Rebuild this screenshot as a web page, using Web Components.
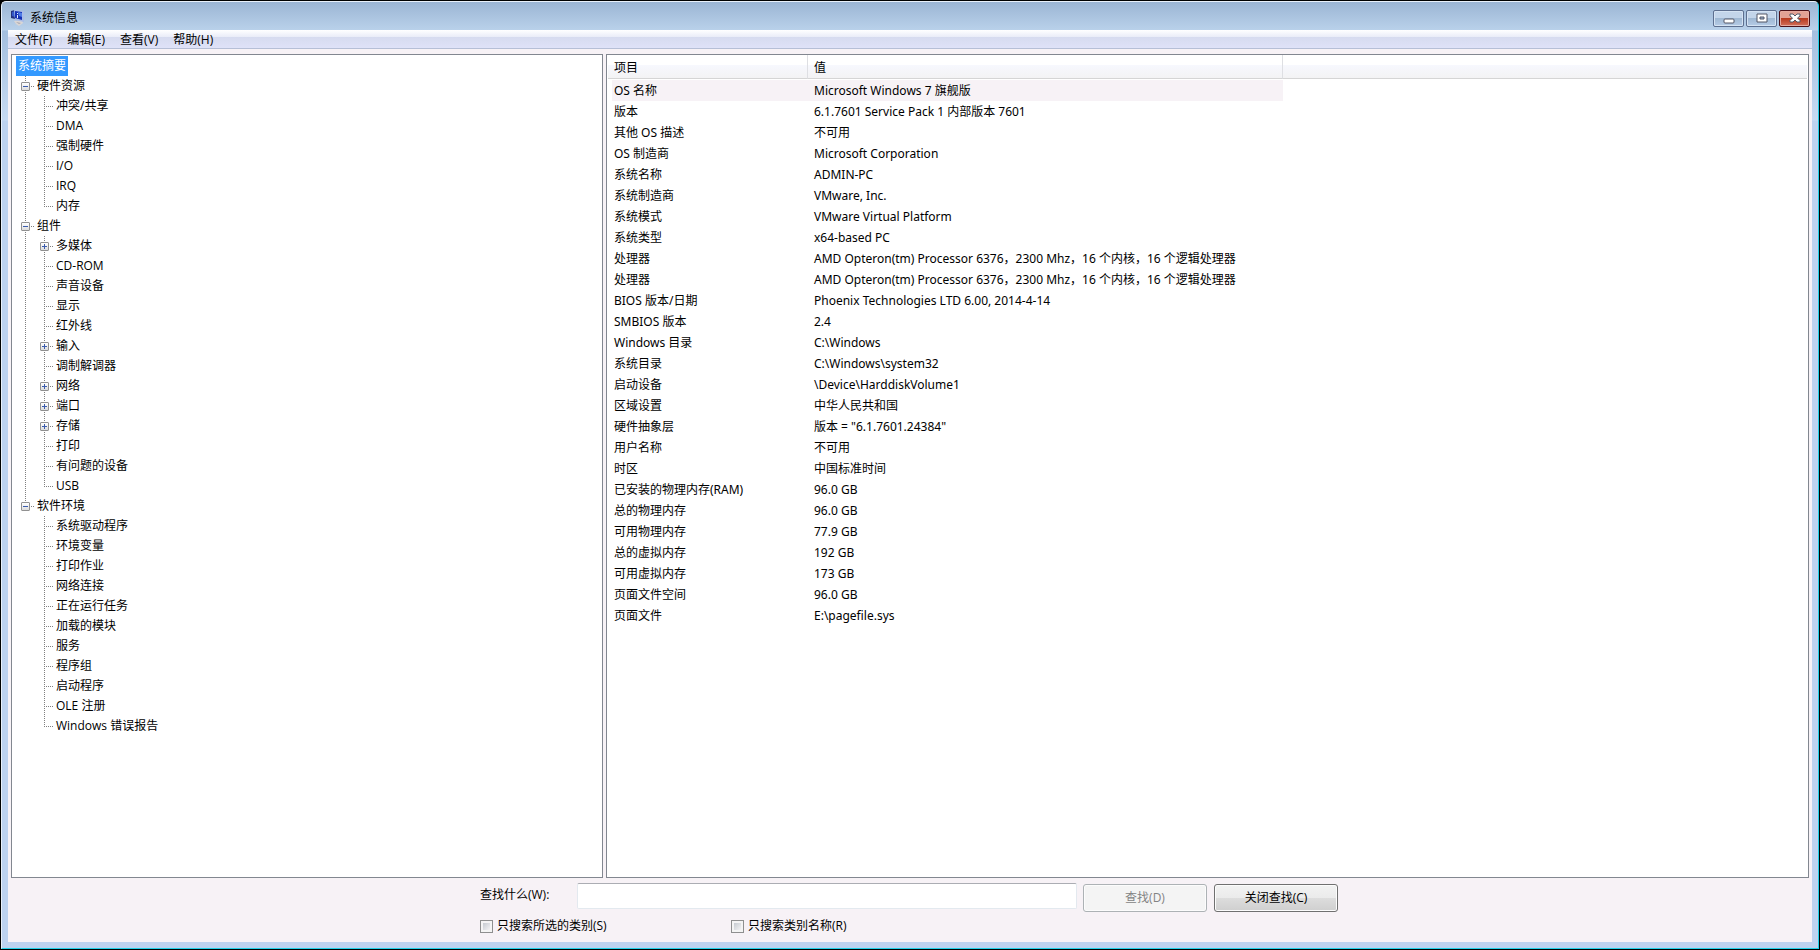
<!DOCTYPE html>
<html lang="zh-CN">
<head>
<meta charset="utf-8">
<title>系统信息</title>
<style>
html, body { height: 100%; margin: 0; }
body { background: #000; font: 12px/20px "Open Sans", "Noto Sans CJK SC", sans-serif; color: #000; }
</style>
</head>
<body>
<sys-window>
  <title-bar slot="title">系统信息</title-bar>
  <menu-strip slot="menu" items="文件(F)|编辑(E)|查看(V)|帮助(H)"></menu-strip>
  <category-tree slot="main"></category-tree>
  <detail-list slot="main"></detail-list>
  <find-panel slot="find"></find-panel>
</sys-window>
<script>
class Base extends HTMLElement {
  constructor() { super(); this.attachShadow({ mode: "open" }); }
  connectedCallback() { this.shadowRoot.innerHTML = this.render(); }
}

customElements.define("sys-window", class extends Base {
  render() { return `
<style>
:host { display: flex; height: 100vh; box-sizing: border-box; padding: 1px; background: #000; --face: #f7f2f6; }
.frame { flex: 1; min-width: 0; display: flex; flex-direction: column; box-sizing: border-box;
  border: 1px solid #e8f0fa; border-right-color: #22d0e8; border-bottom-color: #22d0e8; border-radius: 5px 5px 0 0; padding: 0 6px 6px;
  background: linear-gradient(#9bb5d4, #b9d1ea 28px, #a4bfdf 29px, #c6daf2 118px, #bdd2ef 119px); }
.client { flex: 1; min-height: 0; display: flex; flex-direction: column; background: var(--face); }
.main { flex: 1; min-height: 0; display: grid; grid-template-columns: 592px 1fr; gap: 3px; padding: 5px 3px 0; }
</style>
<div class="frame">
  <slot name="title"></slot>
  <div class="client">
    <slot name="menu"></slot>
    <main class="main"><slot name="main"></slot></main>
    <slot name="find"></slot>
  </div>
</div>`; }
});

customElements.define("title-bar", class extends Base {
  render() { return `
<style>
:host { display: flex; height: 28px; padding: 0 2px 0 3px; }
svg { display: block; }
.icon { margin: 8px 3px 0 0; }
h1 { margin: 6px 0 0; font: inherit; line-height: 20px; flex: 1; }
.controls { display: flex; gap: 2px; padding-top: 8px; }
button { box-sizing: border-box; width: 31px; height: 17px; padding: 0; border: 1px solid #5d6f8f; border-radius: 2px;
  display: flex; align-items: center; justify-content: center; box-shadow: inset 0 0 0 1px #d5e3f3;
  background: linear-gradient(#c3d5ea 50%, #9fb8d3 50%, #b6cce6); }
.close { border-color: #4b1018; box-shadow: inset 0 0 0 1px #e5a99f; background: linear-gradient(#e2a195 50%, #b83a20 50%, #d2705a); }
</style>
<svg class="icon" width="16" height="18" viewBox="0 0 16 18" aria-hidden="true">
  <path d="M3 11l8-1 1 3-4 3-3-2z" fill="#d9d6d6"/><path d="M5 12l5 1-2 1z" fill="#a9a6ad"/>
  <path d="M0 1l4-1v9l-4-1z" fill="#24307c"/><path d="M1 2l3-1v6l-3-1z" fill="#3458c8"/>
  <path d="M3 0l10 1v11l-9-2z" fill="#a9bce6"/><path d="M4 1l7 1v8l-7-2z" fill="#1530b4"/>
  <path d="M7 2l4 1v4l-3-1z" fill="#4f7be6"/><path d="M6 3h1v1H6zm0 2h1v3H6z" fill="#e6efff"/>
</svg>
<h1><slot></slot></h1>
<div class="controls">
  <button aria-label="最小化"><svg width="12" height="11"><rect x="1" y="6" width="10" height="4" rx="1" fill="#fff" stroke="#535666"/></svg></button>
  <button aria-label="最大化"><svg width="12" height="11"><path d="M1 1h10v8H1z" fill="#fff" stroke="#535666"/><path d="M4 4h4v2H4z" fill="#9db4d0" stroke="#535666"/></svg></button>
  <button class="close" aria-label="关闭"><svg width="12" height="11"><path d="M1 1h3l2 2 2-2h3v2L8.500 5 11 7.500V9H8L6 7 4 9H1V7.500L3.500 5 1 3z" fill="#fff" stroke="#535666"/></svg></button>
</div>`; }
});

customElements.define("menu-strip", class extends Base {
  render() { return `
<style>
:host { display: flex; gap: 15px; padding: 0 7px; height: 18px; border-bottom: 1px solid #b6bfd6;
  background: linear-gradient(#fff, #e9ecf8 7px, #d6dbef 7px, #dfe2f8); }
button { font: inherit; line-height: 20px; border: 0; background: none; padding: 0; color: #000; }
</style>
${this.getAttribute("items").split("|").map(t => `<button>${t}</button>`).join("")}`; }
});

const TREE = [
  ["硬件资源", ["冲突/共享", "DMA", "强制硬件", "I/O", "IRQ", "内存"]],
  ["组件", ["+多媒体", "CD-ROM", "声音设备", "显示", "红外线", "+输入", "调制解调器", "+网络", "+端口", "+存储", "打印", "有问题的设备", "USB"]],
  ["软件环境", ["系统驱动程序", "环境变量", "打印作业", "网络连接", "正在运行任务", "加载的模块", "服务", "程序组", "启动程序", "OLE 注册", "Windows 错误报告"]]
];

customElements.define("category-tree", class extends Base {
  render() {
    const row = (label, sign) => `<div class="row"><span class="gutter">${sign ? `<button class="${sign}" aria-label="${label}"></button>` : ""}</span><span class="label">${label}</span></div>`;
    const leaf = t => `<li role="treeitem">${t[0] === "+" ? row(t.slice(1), "plus") : row(t, "")}</li>`;
    return `
<style>
:host { display: block; box-sizing: border-box; border: 1px solid #828790; background: #fff; padding: 1px 4px; overflow: hidden; }
ul { list-style: none; margin: 0; padding: 0; }
ul ul { padding-left: 19px; }
.root { display: inline-block; background: #3399ff; color: #fff; padding: 0 2px; vertical-align: top; }
li { background: repeating-linear-gradient(#808080 0 1px, #fff 1px 2px) 9px 0 / 1px 100% no-repeat; }
li:last-child { background-size: 1px 10px; }
.row { display: flex; height: 20px; }
.gutter { width: 19px; display: flex; align-items: center; padding-left: 5px; box-sizing: border-box;
  background: repeating-linear-gradient(90deg, #808080 0 1px, #fff 1px 2px) 9px 10px / 9px 1px no-repeat; }
.label { padding: 0 2px; white-space: nowrap; }
button { width: 9px; height: 9px; margin-top: 1px; padding: 0; box-sizing: border-box; border: 1px solid #919191; border-radius: 1px;
  background: linear-gradient(#3b5cad, #3b5cad) 1px 3px / 5px 1px no-repeat, linear-gradient(#fff, #dcdcdc); }
.plus { background: linear-gradient(#3b5cad, #3b5cad) 1px 3px / 5px 1px no-repeat, linear-gradient(#3b5cad, #3b5cad) 3px 1px / 1px 5px no-repeat, linear-gradient(#fff, #dcdcdc); }
</style>
<span class="root">系统摘要</span>
<ul role="tree">${TREE.map(([t, kids]) => `<li role="treeitem">${row(t, "minus")}<ul role="group">${kids.map(leaf).join("")}</ul></li>`).join("")}</ul>`; }
});

const ROWS = [
  ["OS 名称", "Microsoft Windows 7 旗舰版"],
  ["版本", "6.1.7601 Service Pack 1 内部版本 7601"],
  ["其他 OS 描述", "不可用"],
  ["OS 制造商", "Microsoft Corporation"],
  ["系统名称", "ADMIN-PC"],
  ["系统制造商", "VMware, Inc."],
  ["系统模式", "VMware Virtual Platform"],
  ["系统类型", "x64-based PC"],
  ["处理器", "AMD Opteron(tm) Processor 6376，2300 Mhz，16 个内核，16 个逻辑处理器"],
  ["处理器", "AMD Opteron(tm) Processor 6376，2300 Mhz，16 个内核，16 个逻辑处理器"],
  ["BIOS 版本/日期", "Phoenix Technologies LTD 6.00, 2014-4-14"],
  ["SMBIOS 版本", "2.4"],
  ["Windows 目录", "C:\\Windows"],
  ["系统目录", "C:\\Windows\\system32"],
  ["启动设备", "\\Device\\HarddiskVolume1"],
  ["区域设置", "中华人民共和国"],
  ["硬件抽象层", "版本 = \"6.1.7601.24384\""],
  ["用户名称", "不可用"],
  ["时区", "中国标准时间"],
  ["已安装的物理内存(RAM)", "96.0 GB"],
  ["总的物理内存", "96.0 GB"],
  ["可用物理内存", "77.9 GB"],
  ["总的虚拟内存", "192 GB"],
  ["可用虚拟内存", "173 GB"],
  ["页面文件空间", "96.0 GB"],
  ["页面文件", "E:\\pagefile.sys"]
];

customElements.define("detail-list", class extends Base {
  render() { return `
<style>
:host { display: block; box-sizing: border-box; border: 1px solid #828790; background: #fff; padding: 0 1px; overflow: hidden; font-family: "Noto Sans", "Noto Sans CJK SC", sans-serif; }
table { width: 100%; table-layout: fixed; border-collapse: separate; border-spacing: 0; }
.c1 { width: 200px; } .c2 { width: 475px; }
th, td { text-align: left; font-weight: normal; white-space: nowrap; box-sizing: border-box; padding: 0 0 0 6px; }
th { height: 24px; padding-top: 2px; border-bottom: 1px solid #d5d5d5; background: linear-gradient(#fff 10px, #f7f8fe 10px, #f3f3f4); }
th:not(:last-child) { border-right: 1px solid #dedfe3; }
td { height: 21px; line-height: 21px; }
tbody::before { content: ""; display: table-row; height: 1px; }
tbody tr:first-child td:not(:last-child) { background: var(--face); }
tbody tr:first-child td:first-child { border-left: 4px solid #fff; padding-left: 2px; }
</style>
<table>
<colgroup><col class="c1"><col class="c2"><col></colgroup>
<thead><tr><th>项目</th><th>值</th><th></th></tr></thead>
<tbody>${ROWS.map(([k, v]) => `<tr><td>${k}</td><td>${v}</td><td></td></tr>`).join("")}</tbody>
</table>`; }
});

customElements.define("find-panel", class extends Base {
  render() { return `
<style>
:host { display: grid; grid-template-columns: 97px 154px 346px 130px 131px; grid-template-rows: 33px 20px;
  justify-content: center; padding: 5px 0 6px; margin-right: 2px; }
.what { line-height: 24px; }
.text { grid-column: 2 / 4; box-sizing: border-box; height: 26px; border: 1px solid #e3e9ef; border-top-color: #abadb3; border-radius: 2px; background: #fff; padding: 0 4px; font: inherit; }
.push { font: inherit; box-sizing: border-box; height: 28px; width: 124px; margin: 1px 0 0; padding: 0; justify-self: end; border: 1px solid #707070; border-radius: 3px; color: #000;
  box-shadow: inset 0 0 0 1px #fcfcfc; background: linear-gradient(#f2f2f2, #ebebeb 50%, #dddddd 50%, #cfcfcf); }
.push:disabled { border-color: #adb2b5; color: #838383; background: #f4f4f4; }
.check { display: flex; align-items: center; gap: 4px; white-space: nowrap; }
.one { grid-column: 1 / 3; }
.check input { appearance: none; box-sizing: border-box; width: 13px; height: 13px; margin: 0; border: 1px solid #8e8f8f;
  background: linear-gradient(135deg, #c5cad0, #f3f3f4) content-box, #f4f4f4; padding: 2px; }
.two { grid-column: 3 / 5; }
</style>
<label class="what" for="q">查找什么(W):</label>
<input class="text" id="q" type="text">
<button class="push" disabled>查找(D)</button>
<button class="push">关闭查找(C)</button>
<label class="check one"><input type="checkbox">只搜索所选的类别(S)</label>
<label class="check two"><input type="checkbox">只搜索类别名称(R)</label>`; }
});
</script>
</body>
</html>
